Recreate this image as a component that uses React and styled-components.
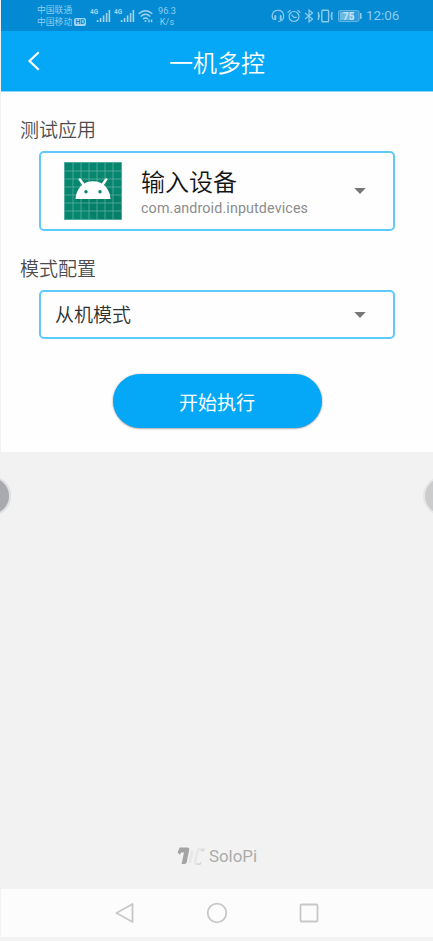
import React from "react";
import styled, { createGlobalStyle } from "styled-components";

const Global = createGlobalStyle`
  * { box-sizing: border-box; }
  body { margin: 0; background: #f2f2f2; font-family: Roboto, "Noto Sans CJK SC", sans-serif; }
  svg { display: block; flex: none; }
`;

const Screen = styled.div`
  position: relative;
  display: flex;
  flex-direction: column;
  width: 433px;
  height: 941px;
  overflow: hidden;
  padding: 0 0 4px 1px;
  background: #f2f2f2;
`;

const StatusBar = styled.div`
  display: flex;
  align-items: center;
  justify-content: space-between;
  flex: none;
  height: 31px;
  padding: 0 34px 0 36px;
  background: #038ad3;
  color: #8dcbed;
`;

const StatusGroup = styled.div`
  display: flex;
  align-items: center;
  height: 31px;
`;

const Carriers = styled.div`
  width: 53px;
  font-size: 8.8px;
  line-height: 12.5px;
  white-space: nowrap;
  padding-top: 1px;
`;

const CarrierLine = styled.div`
  display: flex;
  align-items: center;
  height: 12.5px;
`;

const HdBadge = styled.span`
  margin-left: 2px;
  width: 12px;
  height: 8px;
  border-radius: 2px;
  background: #a3d5f1;
  color: #0382c8;
  font-size: 7px;
  font-weight: 700;
  line-height: 8.5px;
  text-align: center;
`;

const NetSpeed = styled.div`
  width: 20px;
  margin-left: 3px;
  font-size: 9.2px;
  line-height: 11px;
  text-align: center;
`;

const Clock = styled.div`
  margin-left: 4px;
  width: 33px;
  font-size: 13.4px;
  line-height: 31px;
  white-space: nowrap;
`;

const Gap = styled.span`
  width: ${(p) => p.$size}px;
`;

const Header = styled.header`
  display: grid;
  grid-template-columns: 60px 1fr 60px;
  align-items: center;
  flex: none;
  height: 61px;
  background: #04a8f6;
  border-bottom: 1px solid #8bd6f9;
`;

const BackButton = styled.button`
  display: flex;
  padding: 0 0 0 26px;
  border: 0;
  background: none;
`;

const Title = styled.h1`
  margin: 0;
  padding-top: 5px;
  color: #fff;
  font-size: 24px;
  font-weight: 350;
  line-height: 36px;
  text-align: center;
`;

const Panel = styled.main`
  display: flex;
  flex-direction: column;
  flex: none;
  height: 360px;
  padding: 25px 38px 0;
  background: #fefefe;
`;

const Label = styled.div`
  margin: 0 0 6px -19px;
  height: 28px;
  color: #4c4c4c;
  font-size: 19px;
  font-weight: 350;
  line-height: 28px;
`;

const SelectBox = styled.div`
  display: flex;
  align-items: center;
  flex: none;
  width: 356px;
  height: ${(p) => (p.$large ? 80 : 49)}px;
  margin-bottom: ${(p) => (p.$large ? 25 : 35)}px;
  padding: 0 27px 0 ${(p) => (p.$large ? 23 : 14)}px;
  border: 2px solid #5fc9fc;
  border-radius: 5px;
`;

const AppText = styled.div`
  flex: 1;
  margin-left: 19px;
  padding-top: 3px;
`;

const AppName = styled.div`
  color: #141414;
  font-size: 24px;
  font-weight: 350;
  line-height: 32px;
`;

const AppPackage = styled.div`
  color: #8c8c8c;
  font-size: 14.3px;
  letter-spacing: 0.12px;
  line-height: 19px;
`;

const ModeText = styled.div`
  flex: 1;
  padding-top: 3px;
  color: #303030;
  font-size: 19px;
  font-weight: 350;
  line-height: 28px;
`;

const StartButton = styled.button`
  align-self: center;
  width: 209px;
  height: 54px;
  padding: 5px 0 0;
  border: 0;
  border-radius: 27px;
  background: #04a8f6;
  box-shadow: 0 0.5px 2px rgba(0, 0, 0, 0.5);
  color: #fff;
  font-family: inherit;
  font-size: 19px;
  font-weight: 400;
  line-height: 49px;
`;

const Footer = styled.footer`
  display: flex;
  flex: 1;
  align-items: flex-end;
  justify-content: center;
  padding-bottom: 22px;
`;

const Brand = styled.div`
  display: flex;
  align-items: center;
  gap: 4px;
  height: 22px;
  color: #ababab;
  font-size: 16.9px;
  line-height: 22px;
`;

const NavBar = styled.nav`
  display: flex;
  align-items: center;
  justify-content: center;
  gap: 70px;
  flex: none;
  height: 48px;
  background: #fcfcfc;
`;

const EdgeHandle = styled.div`
  position: absolute;
  top: 476px;
  ${(p) => (p.$side === "left" ? "left: -29px;" : "right: -30px;")}
  width: 40px;
  height: 40px;
  border: 2px solid ${(p) => (p.$side === "left" ? "#dedfe1" : "#e7e7e8")};
  border-radius: 50%;
  background: ${(p) => (p.$side === "left" ? "#a9aaaf" : "#cbccce")};
`;

const Signal = () => (
  <svg width="24" height="18" viewBox="0 0 24 18" fill="#a3d5f1">
    <text x="0" y="7" fontFamily="Roboto" fontSize="6.5" fontWeight="700">4G</text>
    <path d="M6.8 13h1.6v2H6.8zM9.8 11h1.6v4H9.8zM12.8 8.5h1.6V15h-1.6zM15.8 6h1.6v9h-1.6zM18.6 3h1.6v12h-1.6z" />
  </svg>
);

const Wifi = () => (
  <svg width="16" height="16" viewBox="0 0 16 16" fill="none" stroke="#a3d5f1" strokeWidth="1.4">
    <path d="M.7 5.7Q7.5-.3 14.3 5.7M2.8 8.5Q7.5 4.2 12.2 8.5M5 11Q7.5 8.8 10 11" />
    <circle cx="7.5" cy="13" r="1" fill="#a3d5f1" stroke="none" />
    <path d="M11 11.5v2.8M13.6 11.5v2.8" />
  </svg>
);

const Headset = () => (
  <svg width="14" height="14" viewBox="0 0 14 14" fill="none" stroke="#8dcbed" strokeWidth="1.2" strokeLinecap="round">
    <path d="M3.3 10.5C1.8 10 1 8.5 1.2 6.5 1.5 3.2 4 1.3 7 1.3s5.4 2 5.7 5.2c.2 3.2-1.2 5.4-5 6" />
    <path d="M4.3 7v3.2M9.7 7v3.2" strokeWidth="2" />
  </svg>
);

const Alarm = () => (
  <svg width="14" height="14" viewBox="0 0 14 14" fill="none" stroke="#8dcbed" strokeWidth="1.2" strokeLinecap="round">
    <circle cx="7" cy="7.5" r="5" />
    <path d="M1 3.4l2.2-2M13 3.4l-2.2-2M4.7 6.2l2.2 2.2h2.3" />
  </svg>
);

const Bluetooth = () => (
  <svg width="10" height="14" viewBox="0 0 10 14" fill="none" stroke="#8dcbed" strokeWidth="1.2">
    <path d="M1 4l7.5 6-3.5 3V1l3.5 3L1 10" />
  </svg>
);

const Vibrate = () => (
  <svg width="17" height="14" viewBox="0 0 17 14" fill="none" stroke="#8dcbed" strokeWidth="1.4">
    <rect x="4.8" y="1.2" width="6.8" height="11.6" rx=".8" />
    <path d="M1.4 3v1.8l.8 1.1-.8 1.1.8 1.1-.8 1.1V11M15 3v1.8l-.8 1.1.8 1.1-.8 1.1.8 1.1V11" />
  </svg>
);

const Battery = () => (
  <svg width="24" height="12" viewBox="0 0 24 12">
    <rect x=".5" y=".5" width="20.5" height="11" rx="1.5" fill="#2f9cd9" stroke="#5fb4e2" />
    <rect x="2" y="2" width="14" height="8" fill="#69b9e5" />
    <path d="M22 3h1.6v6H22z" fill="#8dcbed" />
    <text x="10.7" y="9.7" textAnchor="middle" fontFamily="Roboto" fontSize="10" fontWeight="700" fill="#c4e5f6">75</text>
  </svg>
);

const Caret = () => (
  <svg width="12" height="6" viewBox="0 0 12 6">
    <path d="M.3 0h11.4L6 6z" fill="#777" />
  </svg>
);

const gridLines = [9, 17, 25, 33, 41, 49];

const AndroidIcon = () => (
  <svg width="58" height="58" viewBox="0 0 58 58">
    <rect width="58" height="58" fill="#07866f" />
    <path d="M11.5 37L32 57.5H58V39L45 26z" fill="#056a59" opacity=".25" />
    <path
      d={gridLines.map((v) => `M${v} 0V58M0 ${v}H58`).join("")}
      stroke="#65b4a5"
      strokeWidth=".7"
    />
    <rect x=".4" y=".4" width="57.2" height="57.2" fill="none" stroke="#65b4a5" strokeWidth=".8" />
    <path d="M11.5 37C12 27 19 19.3 29 19.3S46 27 46.5 37z" fill="#fff" />
    <path d="M15.8 17.5l4.5 6M42.2 17.5l-4.5 6" stroke="#fff" strokeWidth="2.6" strokeLinecap="round" />
    <circle cx="22" cy="29.7" r="1.7" fill="#07866f" />
    <circle cx="36" cy="29.7" r="1.7" fill="#07866f" />
  </svg>
);

const SoloPiMark = () => (
  <svg width="28" height="20" viewBox="0 0 28 20" fill="none">
    <path d="M2.6 1.5h7.6q2.4 0 2 2.3L9.8 16q-.4 2-2.2 2H4.6L7 6.6H4L2.9 8.8.6 6.6z" fill="#a4a4a4" />
    <path d="M13.6 4.5h3.2L14.2 17h-2.6z" fill="#e7e7e7" />
    <path d="M26.8 3h-4.3q-1.6 0-2 1.8L18.2 16q-.4 2 1.2 2h3.4" stroke="#e6e6e6" strokeWidth="2.2" />
    <path d="M27.3 2.6l-.6 2h-3M24 15.8l-.5 2.4h-4" stroke="#cbcbcb" strokeWidth=".9" />
  </svg>
);

export default function App() {
  return (
    <>
      <Global />
      <Screen>
        <StatusBar>
          <StatusGroup>
            <Carriers>
              <CarrierLine>中国联通</CarrierLine>
              <CarrierLine>中国移动<HdBadge>HD</HdBadge></CarrierLine>
            </Carriers>
            <Signal />
            <Signal />
            <Wifi />
            <NetSpeed>96.3<br />K/s</NetSpeed>
          </StatusGroup>
          <StatusGroup>
            <Headset />
            <Gap $size={2} />
            <Alarm />
            <Gap $size={3} />
            <Bluetooth />
            <Gap $size={3} />
            <Vibrate />
            <Gap $size={4} />
            <Battery />
            <Clock>12:06</Clock>
          </StatusGroup>
        </StatusBar>
        <Header>
          <BackButton aria-label="返回">
            <svg width="14" height="20" viewBox="0 0 14 20" fill="none" stroke="#fff" strokeWidth="2.2">
              <path d="M11.7 1.3L2.5 10l9.2 8.7" />
            </svg>
          </BackButton>
          <Title>一机多控</Title>
        </Header>
        <Panel>
          <Label>测试应用</Label>
          <SelectBox $large>
            <AndroidIcon />
            <AppText>
              <AppName>输入设备</AppName>
              <AppPackage>com.android.inputdevices</AppPackage>
            </AppText>
            <Caret />
          </SelectBox>
          <Label>模式配置</Label>
          <SelectBox>
            <ModeText>从机模式</ModeText>
            <Caret />
          </SelectBox>
          <StartButton>开始执行</StartButton>
        </Panel>
        <Footer>
          <Brand>
            <SoloPiMark />
            SoloPi
          </Brand>
        </Footer>
        <NavBar>
          <svg width="22" height="22" viewBox="0 0 22 22" fill="none" stroke="#c8c8c8" strokeWidth="1.8" strokeLinejoin="round">
            <path d="M18.5 2v18L2.5 11z" />
          </svg>
          <svg width="22" height="22" viewBox="0 0 22 22" fill="none" stroke="#c8c8c8" strokeWidth="1.8">
            <circle cx="11" cy="11" r="9.3" />
          </svg>
          <svg width="22" height="22" viewBox="0 0 22 22" fill="none" stroke="#c8c8c8" strokeWidth="1.8">
            <rect x="2.5" y="2.5" width="17" height="17" rx="1" />
          </svg>
        </NavBar>
        <EdgeHandle $side="left" />
        <EdgeHandle $side="right" />
      </Screen>
    </>
  );
}
